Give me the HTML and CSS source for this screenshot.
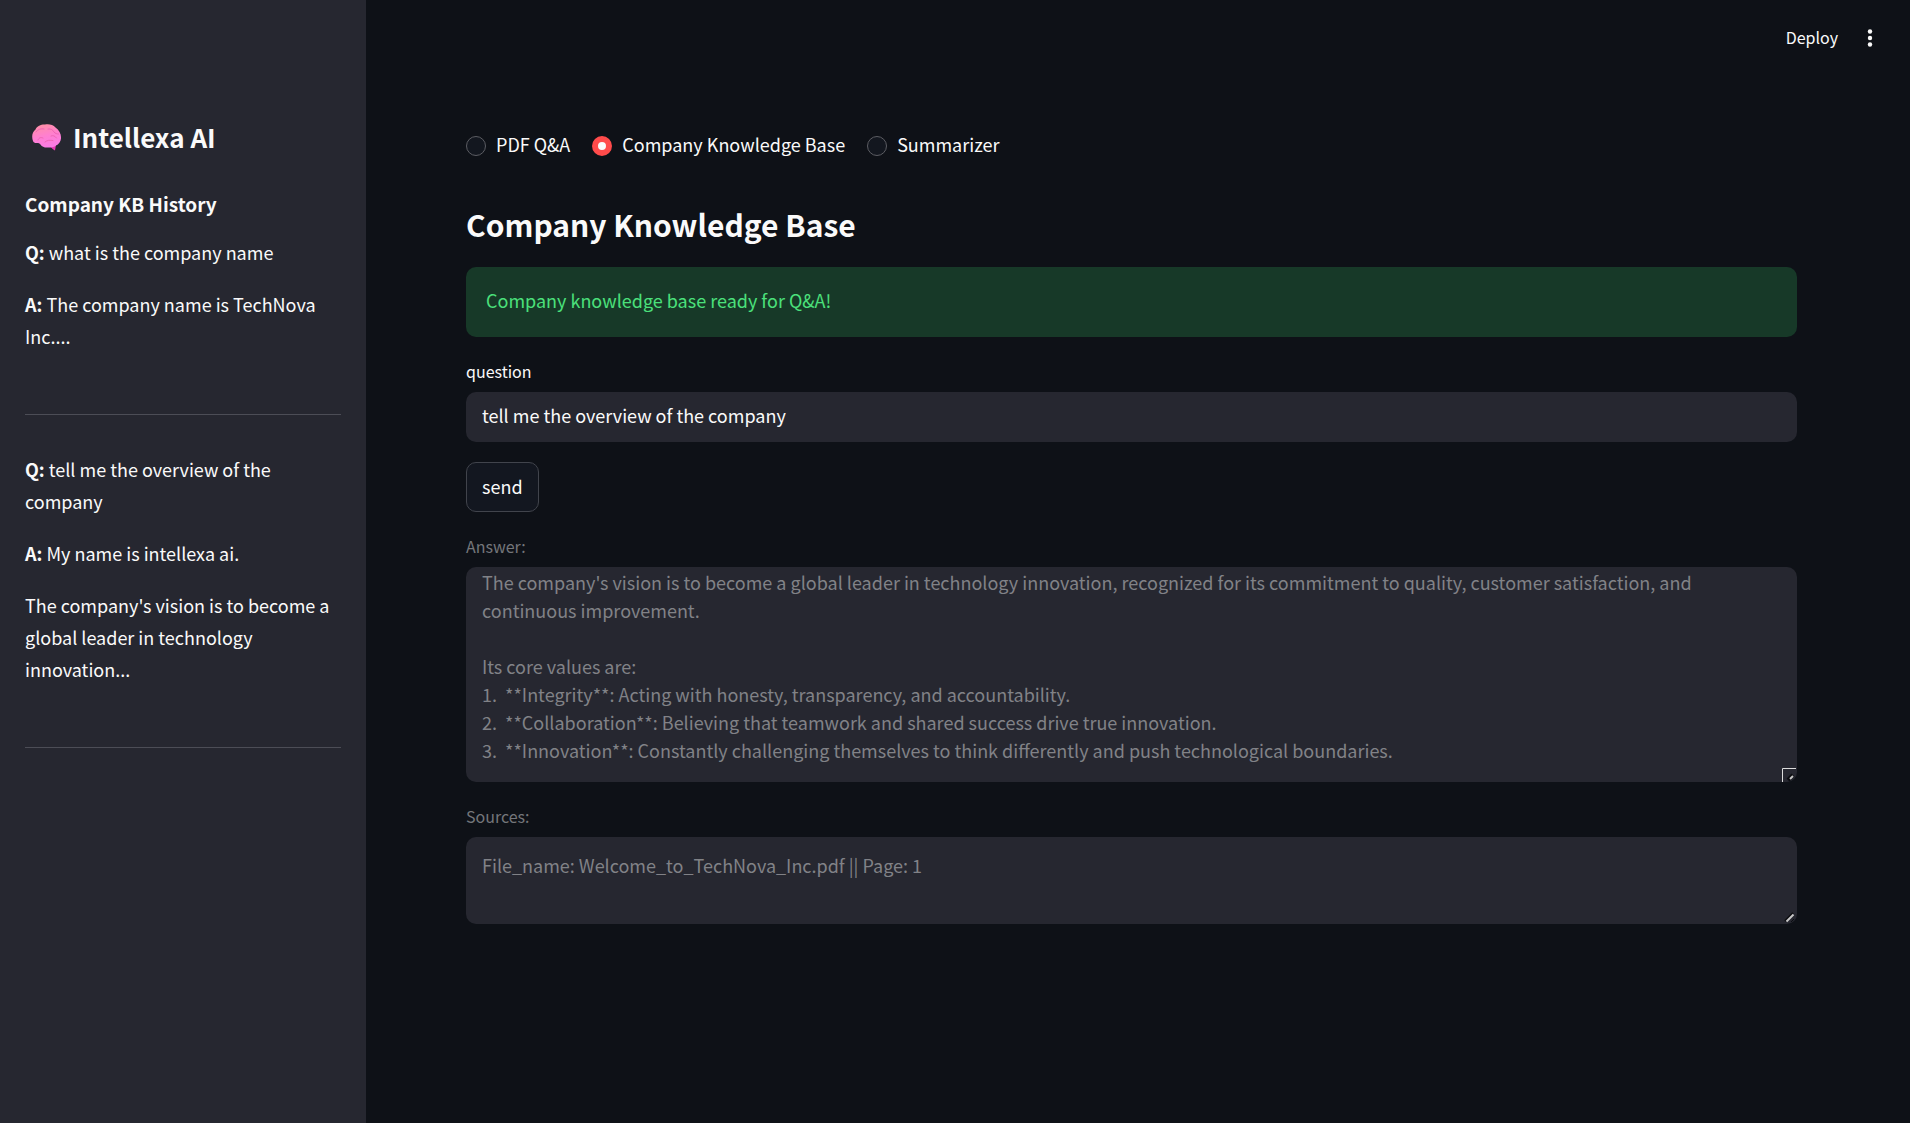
FILE: index.html
```html
<!DOCTYPE html>
<html lang="en">
<head>
<meta charset="utf-8">
<meta name="viewport" content="width=device-width, initial-scale=1">
<title>Intellexa AI</title>
<link rel="stylesheet" href="styles.css">
</head>
<body>
<div class="app">
  <aside class="sidebar">
    <h1 class="brand">
      <svg class="brand-icon" viewBox="0 0 29 27" aria-hidden="true">
        <defs>
          <linearGradient id="brain" x1="0.3" y1="0" x2="0.6" y2="1">
            <stop offset="0" stop-color="#ff8fa6"/>
            <stop offset="0.5" stop-color="#ff7fd0"/>
            <stop offset="1" stop-color="#f97be6"/>
          </linearGradient>
        </defs>
        <path d="M18 21h6l-1 5.500c-1.500-.5-4-2.500-5-5.500z" fill="#e637b4"/>
        <path d="M1 17C-.5 13 0 8 3.500 5.500 5 2 9 .3 13 .5c4-.8 8 .2 10.500 3C27 6 29 9.500 29 13c.3 4-2 7-5 8.500-2 1.800-5 2.300-8 2-3 .3-6-.5-7.500-3-1-1.500-2-1.500-3.500-1.500-2 .2-3.400-.5-4-2z" fill="url(#brain)"/>
        <path d="M4 8c2-3 5-3.500 8-3M16 5c3-.5 5 1 6 3 1 1.500 3 2 4.500 2M6 16c1-2.500 3-3 5-2M13 18c2-2 5-2 8-1.500M19 12c2-1 4 0 5.500 2" fill="none" stroke="#ec62b0" stroke-width="0.900" stroke-linecap="round"/>
      </svg>
      Intellexa AI
    </h1>
    <h3 class="history-title">Company KB History</h3>
    <section class="entry">
      <p><strong>Q:</strong> what is the company name</p>
      <p><strong>A:</strong> The company name is TechNova Inc....</p>
    </section>
    <hr class="divider">
    <section class="entry">
      <p><strong>Q:</strong> tell me the overview of the company</p>
      <p><strong>A:</strong> My name is intellexa ai.</p>
      <p>The company's vision is to become a global leader in technology innovation...</p>
    </section>
    <hr class="divider">
  </aside>

  <div class="page">
    <header class="toolbar">
      <button class="deploy" type="button">Deploy</button>
      <button class="menu" type="button" aria-label="Main menu">
        <svg viewBox="0 0 20 20" width="20" height="20" aria-hidden="true" fill="#fafafa">
          <circle cx="10" cy="3.500" r="2.200"/><circle cx="10" cy="10" r="2.200"/><circle cx="10" cy="16.500" r="2.200"/>
        </svg>
      </button>
    </header>
    <main class="content">
      <div class="modes" role="radiogroup" aria-label="Mode">
        <label class="mode"><input type="radio" name="mode">PDF Q&amp;A</label>
        <label class="mode"><input type="radio" name="mode" checked>Company Knowledge Base</label>
        <label class="mode"><input type="radio" name="mode">Summarizer</label>
      </div>
      <h2 class="title">Company Knowledge Base</h2>
      <div class="alert" role="status">Company knowledge base ready for Q&amp;A!</div>
      <div class="field">
        <label for="question">question</label>
        <input class="control" id="question" type="text" value="tell me the overview of the company">
      </div>
      <button class="send" type="button">send</button>
      <div class="field muted">
        <label for="answer">Answer:</label>
        <div class="area">
          <textarea class="control answer" id="answer" disabled>The company's vision is to become a global leader in technology innovation, recognized for its commitment to quality, customer satisfaction, and continuous improvement.

Its core values are:
1.  **Integrity**: Acting with honesty, transparency, and accountability.
2.  **Collaboration**: Believing that teamwork and shared success drive true innovation.
3.  **Innovation**: Constantly challenging themselves to think differently and push technological boundaries.</textarea>
          <svg class="grip" viewBox="0 0 14 14" aria-hidden="true">
            <path d="M.5 14V.5H14" fill="none" stroke="#dcdcdc"/>
            <path d="M6 12l5-5" stroke="#0b0c10" stroke-width="4"/>
            <path d="M8 11l3-3" stroke="#c8c8c8" stroke-width="2"/>
          </svg>
        </div>
      </div>
      <div class="field muted">
        <label for="sources">Sources:</label>
        <div class="area">
          <textarea class="control sources" id="sources" disabled>File_name: Welcome_to_TechNova_Inc.pdf || Page: 1</textarea>
          <svg class="grip" viewBox="0 0 14 14" aria-hidden="true">
            <path d="M3 11l8-8" stroke="#0b0c10" stroke-width="2"/>
            <path d="M4.500 11.500l7-7" stroke="#c8c8c8" stroke-width="2"/>
            <path d="M9 12l3-3" stroke="#0b0c10" stroke-width="1"/>
          </svg>
        </div>
      </div>
    </main>
  </div>
</div>
</body>
</html>
```

FILE: styles.css
```css
*, *::before, *::after {
  box-sizing: border-box;
}

body {
  margin: 0;
  background: #0e1117;
  color: #fafafa;
  color-scheme: dark;
  font: 18px/32px "Noto Sans CJK JP", "Noto Sans CJK SC", "Noto Sans", sans-serif;
}

h1, h2, h3, p {
  margin: 0;
}

button, input, textarea {
  font: inherit;
  color: inherit;
}

.app {
  display: flex;
  min-height: 100vh;
}

/* Sidebar */
.sidebar {
  flex: 0 0 366px;
  padding: 119px 25px 40px 25px;
  background: #262730;
}

.brand {
  display: flex;
  align-items: center;
  gap: 12px;
  padding-left: 7px;
  font-size: 26px;
  line-height: 36px;
  font-weight: 700;
}

.brand-icon {
  width: 29px;
  height: 27px;
}

.history-title {
  margin: 33px 0 16px;
  font-size: 19px;
  line-height: 32px;
  font-weight: 700;
}

.entry {
  display: flex;
  flex-direction: column;
  gap: 20px;
}

.divider {
  height: 1px;
  margin: 62px 0 38px;
  border: 0;
  background: #4c4d56;
}

/* Main page */
.page {
  flex: 1;
  min-width: 0;
}

.toolbar {
  display: flex;
  align-items: center;
  justify-content: flex-end;
  gap: 22px;
  height: 76px;
  padding-right: 30px;
}

.toolbar button {
  padding: 0;
  border: 0;
  background: none;
}

.toolbar .deploy {
  padding-bottom: 2px;
  font-size: 16px;
}

.menu {
  display: flex;
}

.content {
  display: flex;
  flex-direction: column;
  align-items: stretch;
  gap: 20px;
  padding: 52px 113px 40px 100px;
}

.modes {
  display: flex;
  gap: 22px;
}

.mode {
  display: flex;
  align-items: center;
  gap: 10px;
}

.mode input {
  appearance: none;
  width: 20px;
  height: 20px;
  margin: 4px 0 0;
  border: 1px solid #5c5d63;
  border-radius: 50%;
  background: #13171f;
}

.mode input:checked {
  border: 6px solid #ff4b4b;
  background: #fafafa;
}

.title {
  margin-top: 22px;
  font-size: 30px;
  line-height: 45px;
  font-weight: 700;
}

.alert {
  padding: 17px 20px 21px;
  border-radius: 10px;
  background: #173928;
  color: #4be07b;
}

.field {
  display: flex;
  flex-direction: column;
  gap: 7px;
}

.field label {
  font-size: 16px;
  line-height: 28px;
}

.control {
  display: block;
  width: 100%;
  margin: 0;
  padding: 9px 16px 13px;
  border: 0;
  border-radius: 10px;
  background: #262730;
  line-height: 28px;
}

.muted label {
  color: #74767a;
}

.muted .control {
  color: #818287;
}

.send {
  align-self: flex-start;
  height: 50px;
  padding: 0 15px 3px;
  border: 1px solid #41444c;
  border-radius: 10px;
  background: #131720;
}

.area {
  position: relative;
}

textarea.control {
  resize: none;
  overflow: hidden;
}

.answer {
  height: 215px;
  padding-top: 1px;
}

.sources {
  height: 87px;
  padding-top: 14px;
}

/* Resize handle drawn over the text area's corner */
.grip {
  position: absolute;
  right: 1px;
  bottom: 0;
  width: 14px;
  height: 14px;
  pointer-events: none;
}
```
